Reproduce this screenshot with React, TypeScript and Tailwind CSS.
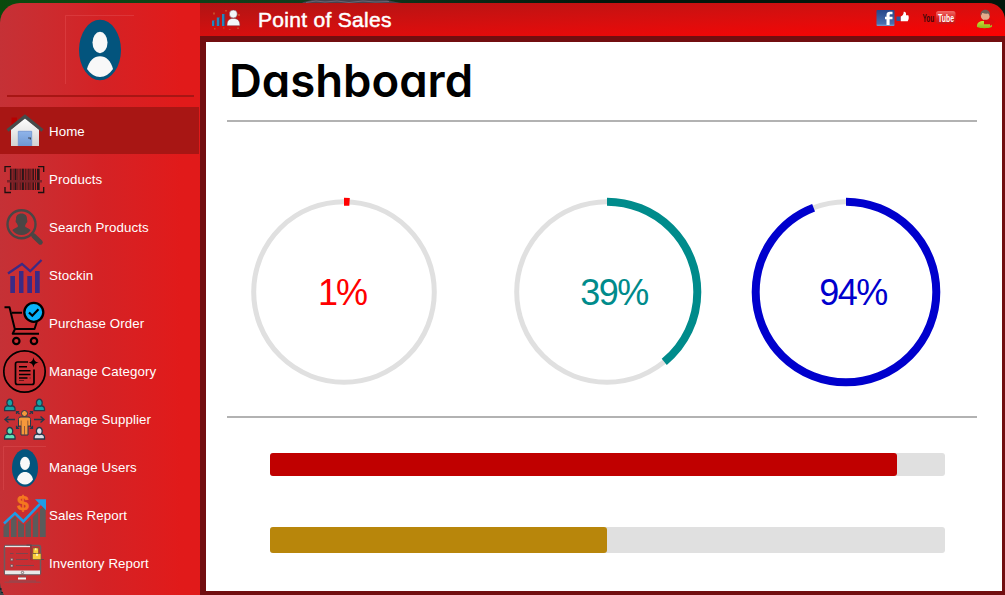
import React from "react";

type IconProps = { children: React.ReactNode };

function RowIcon({ children }: IconProps) {
  return (
    <svg width="49" height="48" viewBox="0 0 49 48" fill="none" className="shrink-0">
      {children}
    </svg>
  );
}

function HomeIcon() {
  return (
    <RowIcon>
      <defs>
        <linearGradient id="wall" x1="0" y1="0" x2="0" y2="1">
          <stop offset="0" stopColor="#ffffff" />
          <stop offset="1" stopColor="#d2d2d2" />
        </linearGradient>
        <linearGradient id="door" x1="0" y1="0" x2="0" y2="1">
          <stop offset="0" stopColor="#8fb4ea" />
          <stop offset="1" stopColor="#6f97d2" />
        </linearGradient>
      </defs>
      <path d="M11.5 10.5h5.5v6l-5.5 5z" fill="#b80000" />
      <path d="M25 10.5 39 22.5V39H11V22.5z" fill="url(#wall)" />
      <path d="M7.5 23.500 25 9.500l17.500 14" stroke="#474b4b" strokeWidth="3.4" />
      <path d="M18.3 39V24.3h13.4V39" fill="url(#door)" stroke="#6e93cf" strokeWidth="0.8" />
      <path d="M28 30.5h3v2h-1.2v-1H28z" fill="#3f4755" />
    </RowIcon>
  );
}

const STRIPES = [
  [10, 1.6], [12.7, 0.8], [14.5, 2], [17.5, 0.8], [19.6, 1], [21.7, 2.2], [24.8, 0.9],
  [26.6, 0.8], [28.3, 1.2], [30.5, 0.8], [32.4, 1.5], [35, 0.9], [37, 2.6],
];

function BarcodeIcon() {
  return (
    <RowIcon>
      <path
        d="M11 11.7H5V17M38 11.7h5.700V17M5 32v5.500h6M43.700 32v5.500H38"
        stroke="#1d1010"
        strokeWidth="1.3"
      />
      <rect x="9.5" y="13.7" width="30.5" height="21.3" fill="#a02024" opacity="0.5" />
      {STRIPES.map(([x, w]) => (
        <rect key={x} x={x} y="13.7" width={w} height="21.3" fill="#2a1518" />
      ))}
      <rect x="7" y="25" width="35" height="2.5" fill="#7b2228" />
    </RowIcon>
  );
}

function SearchIcon() {
  return (
    <RowIcon>
      <circle cx="21.500" cy="21.300" r="14" stroke="#4a4645" strokeWidth="2.400" />
      <path
        d="M21.500 10.500c3.800 0 5.700 2.200 5.500 5.800 0 .8.600 1.200.3 2.400-.3 1.100-.9 1.200-1.300 2.100-.5 1.200-.9 1.400-.9 2.100 0 1.900 4.200 2 5.500 4.300-2 3-5.200 4.800-9.100 4.800s-7.100-1.800-9.100-4.800c1.300-2.300 5.500-2.400 5.500-4.300 0-.7-.4-.9-.9-2.100-.4-.9-1-1-1.300-2.100-.3-1.200.3-1.600.3-2.400-.2-3.600 1.700-5.800 5.500-5.800z"
        fill="#4a4645"
      />
      <path d="M31 30.500 34 33" stroke="#4a4645" strokeWidth="2.500" />
      <path d="M33.800 33 40.300 39.200" stroke="#4a4645" strokeWidth="5" strokeLinecap="round" />
    </RowIcon>
  );
}

function StockIcon() {
  return (
    <RowIcon>
      <path d="M8 22.500 22 13l8.200 7.200L41.500 9" stroke="#3b2a85" strokeWidth="2.300" />
      <path d="M10.300 25H15v17h-4.700zM19 20h4.500v22H19zM27.300 25H32v17h-4.700zM35 20h4.700v22H35z" fill="#3b2a85" />
    </RowIcon>
  );
}

function CartIcon() {
  return (
    <RowIcon>
      <path
        d="M4.500 8.300h5L14.800 30H34.500l2.300-7M12 13.700h10M15 30l-2.300 4.800H39"
        stroke="#000"
        strokeWidth="2"
        strokeLinejoin="round"
      />
      <circle cx="16.300" cy="42" r="3.200" stroke="#000" strokeWidth="2.200" />
      <circle cx="34" cy="42" r="3.200" stroke="#000" strokeWidth="2.200" />
      <circle cx="33.800" cy="13.300" r="9.500" fill="#09b2fa" stroke="#000" strokeWidth="2.300" />
      <path d="m29 13.500 3.300 3.200 6.200-6.400" stroke="#000" strokeWidth="2.200" />
    </RowIcon>
  );
}

function CategoryIcon() {
  return (
    <RowIcon>
      <circle cx="24.500" cy="24.500" r="20.700" stroke="#000" strokeWidth="1.700" />
      <path
        d="M28 15H17.500a2 2 0 0 0-2 2v18.500a2 2 0 0 0 2 2H32a2 2 0 0 0 2-2V22.500"
        stroke="#000"
        strokeWidth="1.700"
      />
      <path d="M33.500 10.200c.8 3.700 1.600 4.500 5.300 5.300-3.700.8-4.500 1.600-5.300 5.300-.8-3.700-1.600-4.500-5.300-5.300 3.700-.8 4.500-1.600 5.300-5.300z" fill="#000" />
      <path d="M19 19.700h8M19 23.800h11.500M19 27.500h11.500M19 31h8.500" stroke="#000" strokeWidth="1.500" />
      <path d="M29.500 31h1.200M19 33.500h5" stroke="#000" strokeWidth="1" opacity=".5" />
    </RowIcon>
  );
}

function Person({ x, y, fill }: { x: number; y: number; fill: string }) {
  return (
    <g transform={`translate(${x} ${y})`} fill={fill} stroke="#26384a" strokeWidth="1.300">
      <path d="M-5.200 11V9C-5.200 6.300-2.500 5.800 0 5.800s5.200.5 5.200 3.200v2z" />
      <ellipse cx="0" cy="3" rx="2.900" ry="3.500" />
    </g>
  );
}

function SupplierIcon() {
  return (
    <RowIcon>
      <Person x={9.800} y={4.700} fill="#16a5a5" />
      <Person x={39.300} y={4.700} fill="#16a5a5" />
      <Person x={9.800} y={33} fill="#5fe0b4" />
      <Person x={39.300} y={33} fill="#dcdce4" />
      <path
        d="M15 24.500H5m3.500-3-3.500 3 3.500 3M34 24.500h10m-3.500-3 3.500 3-3.500 3"
        stroke="#26384a"
        strokeWidth="1.400"
      />
      <path
        d="m19.500 19-3-2.500m0 2.500v-2.500h2.700M29.500 19l3-2.500m0 2.500v-2.500h-2.700M19.500 30.500l-3 3m0-2.700v2.700h2.700M29.500 30.500l3 3m0-2.700v2.700h-2.700"
        stroke="#26384a"
        strokeWidth="1.200"
      />
      <path
        d="M21 22h7c2 0 2.500 1 2.500 2.500V31h-2.500v9h-7v-9h-2.500v-6.500C18.500 23 19 22 21 22z"
        fill="#f5983b"
        stroke="#26384a"
        strokeWidth="1"
      />
      <path d="M24.500 31v9M21.200 25.500V31M27.800 25.500V31" stroke="#7b4a35" strokeWidth=".8" />
      <circle cx="24.500" cy="18.500" r="3" fill="#f5983b" stroke="#26384a" strokeWidth="1" />
    </RowIcon>
  );
}

function UserIcon() {
  return (
    <RowIcon>
      <path d="M3.500 47V3.500H46" stroke="#d94a4c" strokeWidth="1" opacity=".6" />
      <ellipse cx="25" cy="25" rx="13" ry="18.800" fill="#03547d" />
      <ellipse cx="25" cy="20.300" rx="4.900" ry="6.600" fill="#f8f8f8" />
      <path d="M17 36.500c1-5 4.300-7.500 8-7.500s7 2.500 8 7.500c-2.200 3.300-4.900 5-8 5s-5.800-1.700-8-5z" fill="#f8f8f8" />
    </RowIcon>
  );
}

function SalesIcon() {
  return (
    <RowIcon>
      <path
        d="M3.500 35.500 9 30.500V46H3.500zM11 29l4-3.500 1.500 1.500v19H11zM18 29l5 4.500 1-.5v13h-6zM25.500 33l5.500-5.500V46h-5.500zM32.800 26l5.500-5.500V46h-5.500zM39.800 18.500l3-2.500 2.900 2.500V46h-5.900z"
        fill="#5b5b5b"
      />
      <path d="m4 32.500 11-10.200 8.300 8L40 13" stroke="#1e9ce6" strokeWidth="2.600" />
      <path d="M35 8.200h11v11z" fill="#1e9ce6" />
      <text
        x="22.800"
        y="19"
        textAnchor="middle"
        fill="#f5781f"
        stroke="#f5781f"
        strokeWidth=".5"
        className="font-['Liberation_Sans'] text-[21px] font-bold"
      >
        $
      </text>
    </RowIcon>
  );
}

function InventoryIcon() {
  return (
    <RowIcon>
      <rect x="4.500" y="6.500" width="36" height="29" rx="1.500" stroke="#6d5b60" strokeWidth="1.500" />
      <path d="M5 7.500h25" stroke="#ece6e6" strokeWidth="1.300" />
      <rect x="5" y="31.500" width="35" height="3.700" fill="#e8e8e8" />
      <circle cx="22.500" cy="33.500" r="1.200" fill="#e8e8e8" stroke="#6d5b60" strokeWidth=".8" />
      <path d="M19.500 36h6v2.500h-6z" fill="#b33a3c" stroke="#6d5b60" strokeWidth=".6" />
      <path d="M18 39.500h8" stroke="#f3f3f3" strokeWidth="2" />
      <path d="M4.500 43.200h36M9 42h27" stroke="#82535a" strokeWidth=".8" />
      <path d="M16 14.500h12M16 20.500h12M16 26.500h18M10 14.500h3.500" stroke="#7d454d" strokeWidth="1.200" />
      <path d="M10.500 19.300h2.500v2.500h-2.500zM10.500 25.500h2.500V28h-2.500z" fill="#d2b1b3" stroke="#70494f" strokeWidth=".7" />
      <path d="M26.500 6h4.500v14.500h13" stroke="#684449" strokeWidth="1.200" />
      <path d="M33 9h5.500v5.500H33zM32.500 14.500h8.500v6h-8.500z" fill="#f8ce3d" stroke="#765b39" strokeWidth=".7" />
      <path d="M35 9.300h1.500v2H35zM36 14.800h2v2h-2z" fill="#fff2bd" />
      <circle cx="32" cy="21" r="1.100" fill="#cc2529" />
    </RowIcon>
  );
}

const NAV = [
  { label: "Home", Icon: HomeIcon },
  { label: "Products", Icon: BarcodeIcon },
  { label: "Search Products", Icon: SearchIcon },
  { label: "Stockin", Icon: StockIcon },
  { label: "Purchase Order", Icon: CartIcon },
  { label: "Manage Category", Icon: CategoryIcon },
  { label: "Manage Supplier", Icon: SupplierIcon },
  { label: "Manage Users", Icon: UserIcon },
  { label: "Sales Report", Icon: SalesIcon },
  { label: "Inventory Report", Icon: InventoryIcon },
];

function Sidebar() {
  return (
    <aside className="flex w-[200px] shrink-0 flex-col overflow-hidden rounded-tl-[20px] bg-linear-to-r from-[#c53136] via-[#d42225] via-50% to-[#e11a1a] to-90%">
      <div className="flex h-[92px] shrink-0 justify-center">
        <svg width="70" height="92" viewBox="66 3 70 92" fill="none">
          <path d="M66.500 84V15.500H135" stroke="#df4547" strokeWidth="1" opacity=".6" />
          <ellipse cx="101" cy="50" rx="21" ry="30.200" fill="#03547d" />
          <ellipse cx="101" cy="42.500" rx="7.500" ry="10.700" fill="#f8f8f8" />
          <path d="M88 69c2.200-8.500 7-12.800 13-12.800S111.800 60.500 114 69c-3.800 5.300-8 8-13 8s-9.200-2.700-13-8z" fill="#f8f8f8" />
        </svg>
      </div>
      <div className="mr-1.5 ml-[7px] h-0.5 shrink-0 bg-[#a81614]" />
      <nav className="mt-2.5">
        {NAV.map(({ label, Icon }, i) => (
          <a
            key={label}
            className={
              i === 0
                ? "mr-px mb-px flex h-[47px] items-start bg-[#a81614]"
                : "flex h-12 items-start"
            }
          >
            <Icon />
            <span className="text-[13.3px] leading-[50px] tracking-[0.1px] whitespace-nowrap text-white">
              {label}
            </span>
          </a>
        ))}
      </nav>
    </aside>
  );
}

function HeaderBar() {
  return (
    <header className="flex h-[33px] shrink-0 items-start rounded-tr-[17px] bg-linear-to-br from-[#b01414] to-[#fc0101]">
      <svg width="58" height="33" viewBox="200 3 58 33" fill="none">
        <path d="M212 20.500h3V26h-3zM216.800 17.500h3V26h-3zM222 14h3v12h-3z" fill="#2586bd" />
        <path d="M214.500 20.500V26M219.500 17.500V26M224.700 14v12" stroke="#513e67" strokeWidth="1" />
        <path d="M213 12.500h2v2h-2zM225 10h2v1.500h-2zM238 14h2v2h-2zM214 28h1.500v1.500H214zM223 27.500h1.500v1H223zM237 27.500h2v1.500h-2zM229 29h1.500v1H229z" fill="#c94928" />
        <circle cx="233.300" cy="14" r="4" fill="#f2f7fa" stroke="#783e49" strokeWidth=".5" />
        <path d="M227 25.700c0-5 1.800-7.300 6.300-7.300s6.600 2.300 6.600 7.300z" fill="#f2f7fa" stroke="#783e49" strokeWidth=".5" />
      </svg>
      <h1 className="flex-1 text-[21px] leading-[34px] tracking-[0.300px] whitespace-nowrap text-white [-webkit-text-stroke:0.5px_white]">
        Point of Sales
      </h1>
      <div className="flex">
        <svg width="50" height="33" viewBox="870 3 50 33" fill="none">
          <defs>
            <linearGradient id="fb" x1="0" y1="0" x2="0" y2="1">
              <stop offset="0" stopColor="#25468a" />
              <stop offset=".85" stopColor="#496fae" />
              <stop offset="1" stopColor="#7b9ccb" />
            </linearGradient>
          </defs>
          <rect x="876.500" y="10" width="18" height="16" rx="1" fill="url(#fb)" />
          <path d="M892.500 11.800v2.500h-1.700c-1 0-1.200.4-1.200 1.200v1.300h2.900v2.400h-2.900V25h-3.100v-5.800H885v-2.400h1.500v-1.700c0-2.200 1.200-3.300 3.300-3.300z" fill="#fff" />
          <path d="M896.500 16.500h4V21h-4z" fill="#31549a" />
          <path d="M900.800 16.500c2-.8 2.900-2.300 2.900-4.700 1.900-.2 2.700 1 2.300 3.500h2.300c.8 2 .6 4-.6 5.900h-6.900z" fill="#fff" />
        </svg>
        <svg width="50" height="33" viewBox="920 3 50 33" fill="none">
          <defs>
            <linearGradient id="tube" x1="0" y1="0" x2="0" y2="1">
              <stop offset="0" stopColor="#f06a66" />
              <stop offset=".6" stopColor="#d81f20" />
              <stop offset="1" stopColor="#c81616" />
            </linearGradient>
          </defs>
          <rect x="936" y="11" width="19.500" height="13" rx="2.500" fill="url(#tube)" />
          <text x="0" y="0" transform="translate(922.5 22) scale(.62 1)" fill="#3a0909" className="text-[10.500px] font-bold">
            You
          </text>
          <text x="0" y="0" transform="translate(938 22) scale(.66 1)" fill="#ffffff" className="text-[10.500px] font-bold">
            Tube
          </text>
        </svg>
        <svg width="35" height="33" viewBox="970 3 35 33" fill="none">
          <defs>
            <linearGradient id="shirt" x1="0" y1="0" x2="0" y2="1">
              <stop offset="0" stopColor="#c6e235" />
              <stop offset="1" stopColor="#91b51b" />
            </linearGradient>
          </defs>
          <path d="M977 27c-.5-3.500 1.500-5.500 5-6h5c3.500.5 5.300 2 4.800 6-4 1.600-10.800 1.600-14.800 0z" fill="url(#shirt)" />
          <circle cx="985.300" cy="16" r="4.400" fill="#e4a98a" />
          <path d="M980.500 16.500c-.5-4.500 1.700-6.700 4.800-6.700s5.200 2.200 4.600 6.700l-1.500-3c-2 .3-4.500.1-6.200-.7z" fill="#6f5f58" />
          <path d="M984 19.700h6V18l5.500 4-5.500 4v-1.800h-6z" fill="#df0b0e" />
        </svg>
      </div>
    </header>
  );
}

type RingProps = { percent: number; color: string; size: string };

const R = 90.3;
const C = 2 * Math.PI * R;

function Ring({ percent, color, size }: RingProps) {
  return (
    <div className="grid h-[190px] w-[190px] shrink-0 place-items-center">
      <svg width="190" height="190" viewBox="0 0 190 190" fill="none" className="col-start-1 row-start-1">
        <circle cx="95" cy="95" r={R} stroke="#e0e0e0" strokeWidth="5" />
        <circle
          cx="95"
          cy="95"
          r={R}
          stroke={color}
          strokeWidth="8"
          strokeDasharray={`${(C * percent) / 100} ${C}`}
          transform="rotate(-90 95 95)"
        />
      </svg>
      <span className={size} style={{ color }}>
        {percent}%
      </span>
    </div>
  );
}

function Dashboard() {
  return (
    <main className="flex min-h-0 flex-1 flex-col bg-[#720e10] pt-1.5 pr-[3px] pb-1 pl-1.5">
      <div className="flex-1 bg-white pl-[21px]">
        <h2 className="h-[78px] pt-[9px] pl-[2px] font-['Inter'] text-[45.500px] leading-[60px] font-semibold whitespace-nowrap text-black [font-feature-settings:'cv11']">
          Dashboard
        </h2>
        <div className="h-0.5 w-[750px] bg-[#b2b2b2]" />
        <div className="flex pt-[75px] pl-[22px]">
          <Ring percent={1} color="#ff0000" size="col-start-1 row-start-1 mr-1 pt-0.5 text-[36px] leading-none tracking-[-2px]" />
          <div className="ml-[73px]">
            <Ring percent={39} color="#008b8b" size="col-start-1 row-start-1 ml-3.5 pt-0.5 text-[36px] leading-none tracking-[-1.500px]" />
          </div>
          <div className="ml-[49px]">
            <Ring percent={94} color="#0000cd" size="col-start-1 row-start-1 ml-3.5 pt-0.5 text-[36px] leading-none tracking-[-1.500px]" />
          </div>
        </div>
        <div className="mt-[29px] h-0.5 w-[750px] bg-[#b2b2b2]" />
        <div className="mt-[35px] ml-[43px] h-[23px] w-[675px] rounded-[3px] bg-[#e0e0e0]">
          <div className="h-full w-[627px] rounded-[3px] bg-[#c00000]" />
        </div>
        <div className="mt-[51px] ml-[43px] h-[26px] w-[675px] rounded-[3px] bg-[#e0e0e0]">
          <div className="h-full w-[337px] rounded-[3px] bg-[#b8860b]" />
        </div>
      </div>
    </main>
  );
}

export default function App() {
  return (
    <div className="relative flex h-[595px] w-[1005px] flex-col overflow-hidden bg-linear-to-r from-[#0a4a0d] via-[#11391d] via-35% to-[#03170b] to-60% font-['Liberation_Sans',Arial,sans-serif]">
      <div className="h-[3px] shrink-0">
        <svg width="1005" height="3" viewBox="0 0 1005 3">
          <path d="M302 3c3-2 8-2 10-3h75c5 1 8 2 15 3z" fill="#45434d" />
          <path d="M306 2.500 316 1l9 1 12-1 12 1.500 14-1.500 12 1 14-.5" stroke="#6c6674" fill="none" strokeWidth="1" />
        </svg>
      </div>
      <div className="flex min-h-0 flex-1">
        <Sidebar />
        <div className="flex min-w-0 flex-1 flex-col">
          <HeaderBar />
          <Dashboard />
        </div>
      </div>
      <svg width="5" height="12" viewBox="0 0 5 12" className="absolute bottom-0 left-0">
        <path d="M0 0c.5 5 2 9 4 12H0z" fill="#3c4748" />
        <path d="M0 5h1.500v2H0zM1 9h2v1H1z" fill="#14272a" />
      </svg>
    </div>
  );
}
